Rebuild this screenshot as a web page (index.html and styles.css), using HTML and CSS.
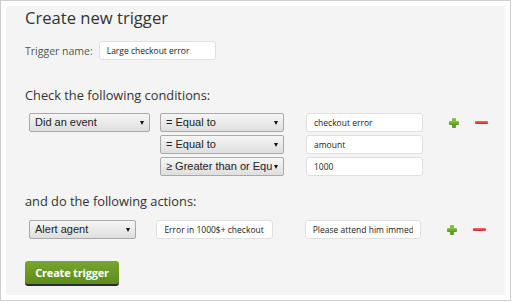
FILE: index.html
```html
<!DOCTYPE html>
<html lang="en">
<head>
    <meta charset="UTF-8" />
    <title>Create new trigger</title>
    <link rel="stylesheet" href="styles.css">
</head>
<body>
    <div class="frame">
        <div class="panel">
            <h1>Create new trigger</h1>

            <div class="name-row">
                <label for="trigger-name">Trigger name:</label>
                <div class="field name-field" id="trigger-name">Large checkout error</div>
            </div>

            <h2>Check the following conditions:</h2>

            <div class="conditions">
                <div class="select sel-event"><span class="clip">Did an event</span><span class="arrow"></span></div>
                <div class="select sel-op"><span class="clip">= Equal to</span><span class="arrow"></span></div>
                <div class="field"><span class="clip">checkout error</span></div>
                <div class="icons">
                    <span class="plus"></span>
                    <span class="minus"></span>
                </div>

                <div class="select sel-op row2"><span class="clip">= Equal to</span><span class="arrow"></span></div>
                <div class="field row2"><span class="clip">amount</span></div>

                <div class="select sel-op row3"><span class="clip">≥ Greater than or Equal to</span><span class="arrow"></span></div>
                <div class="field row3"><span class="clip">1000</span></div>
            </div>

            <h2 class="actions-title">and do the following actions:</h2>

            <div class="actions">
                <div class="select sel-action"><span class="clip">Alert agent</span><span class="arrow"></span></div>
                <div class="field"><span class="clip">Error in 1000$+ checkout</span></div>
                <div class="field last"><span class="clip">Please attend him immediately</span></div>
                <div class="icons">
                    <span class="plus"></span>
                    <span class="minus"></span>
                </div>
            </div>

            <button class="create-btn">Create trigger</button>
        </div>
    </div>
</body>
</html>
```

FILE: styles.css
```css
body {
    margin: 0;
    background: #fff;
    font-family: "Open Sans", sans-serif;
    color: #333;
}

.frame {
    width: 511px;
    height: 301px;
    border: 1px solid #cfcfcf;
    padding: 5px;
    box-sizing: border-box;
}

.panel {
    background: #f4f4f4;
    height: 100%;
    padding: 0 19px;
    box-sizing: border-box;
    overflow: hidden;
}

h1 {
    margin: 0;
    padding-top: 1px;
    font-size: 16.6px;
    font-weight: normal;
    line-height: 22px;
    color: #333;
}

.name-row {
    display: flex;
    align-items: center;
    margin-top: 12px;
}

.name-row label {
    font-size: 10.5px;
    color: #555;
    margin-right: 6px;
}

.field {
    width: 117px;
    height: 19px;
    box-sizing: border-box;
    background: #fff;
    border: 1px solid #e0e0e0;
    border-radius: 3px;
    padding: 0 7px;
    font-size: 8.5px;
    line-height: 17px;
    color: #222;
    white-space: nowrap;
    overflow: hidden;
}

h2 {
    margin: 26px 0 0;
    font-size: 12.8px;
    font-weight: normal;
    line-height: 18px;
    color: #333;
}

h2.actions-title {
    margin-top: 16px;
}

.select {
    position: relative;
    height: 19px;
    box-sizing: border-box;
    border: 1px solid #a9a9a9;
    border-radius: 2px;
    background: linear-gradient(#f6f6f6, #dedede);
    padding: 0 11px 0 5px;
    font-family: "Liberation Sans", Arial, sans-serif;
    font-size: 11px;
    line-height: 17px;
    color: #222;
    white-space: nowrap;
}

/* kleines schwarzes Dreieck statt Pfeil-Glyph */
.select .arrow {
    position: absolute;
    right: 5px;
    top: 7px;
    width: 0;
    height: 0;
    border-left: 2.5px solid transparent;
    border-right: 2.5px solid transparent;
    border-top: 4px solid #111;
}

.clip {
    display: block;
    overflow: hidden;
}

.conditions {
    display: grid;
    grid-template-columns: 131px 146px 143px auto;
    grid-template-rows: 19px 19px 19px;
    row-gap: 3px;
    margin: 9px 0 0 4px;
}

.sel-event {
    grid-column: 1;
    grid-row: 1;
    width: 121px;
}

.sel-op {
    grid-column: 2;
    width: 124px;
}

.conditions .field {
    grid-column: 3;
}

.row2 { grid-row: 2; }
.row3 { grid-row: 3; }

.icons {
    display: flex;
    align-items: center;
    height: 19px;
    gap: 16px;
}

.plus {
    position: relative;
    width: 10px;
    height: 10px;
}

.plus::before,
.plus::after {
    content: "";
    position: absolute;
    background: linear-gradient(#8cc63f, #4f9a1d);
    border-radius: 1px;
}

.plus::before {
    left: 3px;
    top: 0;
    width: 4px;
    height: 10px;
}

.plus::after {
    left: 0;
    top: 3px;
    width: 10px;
    height: 4px;
}

.minus {
    width: 13px;
    height: 3px;
    border-radius: 1px;
    background: linear-gradient(#f06a6a, #cf2a2a);
}

.actions {
    display: flex;
    align-items: center;
    margin: 10px 0 0 4px;
}

.sel-action {
    width: 108px;
    margin-right: 20px;
}

.actions .field {
    margin-right: 32px;
}

.actions .field.last {
    margin-right: 26px;
}

.create-btn {
    display: block;
    margin-top: 22px;
    width: 94px;
    height: 25px;
    border: none;
    border-bottom: 2px solid #2c2c2c;
    border-radius: 3px;
    background: linear-gradient(#78a52e, #5d8c18);
    color: #fff;
    font-family: "Open Sans", sans-serif;
    font-size: 11px;
    font-weight: bold;
    letter-spacing: -0.2px;
    padding: 0;
    cursor: pointer;
}
```
